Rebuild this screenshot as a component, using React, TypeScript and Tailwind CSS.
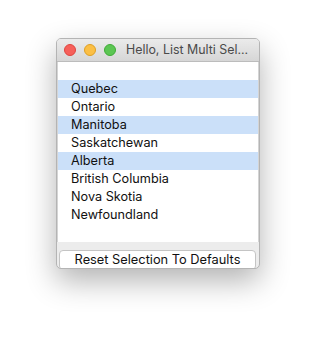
import React from "react";

const provinces = [
  { name: "Quebec", selected: true },
  { name: "Ontario", selected: false },
  { name: "Manitoba", selected: true },
  { name: "Saskatchewan", selected: false },
  { name: "Alberta", selected: true },
  { name: "British Columbia", selected: false },
  { name: "Nova Skotia", selected: false },
  { name: "Newfoundland", selected: false },
];

const font = { fontFamily: "Inter, 'Liberation Sans', sans-serif" };

export default function App() {
  return (
    <div className="w-[316px] h-[342px] bg-white pt-[38px] pl-[56px]" style={font}>
      <div className="w-[204px] h-[231px] flex flex-col rounded-[5px] border border-[#b4b4b4] bg-[#ececec] overflow-hidden shadow-[0_12px_30px_rgba(0,0,0,0.3)]">
        {/* title bar */}
        <div className="h-[23px] shrink-0 flex items-center bg-gradient-to-b from-[#ebebeb] to-[#d6d6d6] border-b border-[#bcbcbc]">
          <div className="flex items-center gap-[8px] pl-[7px]">
            <span className="w-[12px] h-[12px] rounded-full bg-[#f6605a] border border-[#e0443e]" />
            <span className="w-[12px] h-[12px] rounded-full bg-[#fbbf45] border border-[#dfa023]" />
            <span className="w-[12px] h-[12px] rounded-full bg-[#5cc653] border border-[#3fac37]" />
          </div>
          <span className="ml-[10px] text-[12.4px] text-[#4a4a4a] whitespace-nowrap">
            Hello, List Multi Sel...
          </span>
        </div>

        {/* list */}
        <div className="h-[180px] shrink-0 bg-white border-l border-[#d4d4d4] border-r pt-[18px]">
          {provinces.map((p) => (
            <div
              key={p.name}
              className={`h-[18px] flex items-center pl-[13px] text-[12.7px] text-[#111] ${
                p.selected ? "bg-[#cbe0f9]" : ""
              }`}
            >
              {p.name}
            </div>
          ))}
        </div>

        {/* bottom bar */}
        <div className="flex-1 pt-[4px] pl-[2px] pr-[3px]">
          <button className="w-full h-[20px] rounded-[4px] bg-white border border-[#c4c4c4] text-[12.8px] text-[#111] leading-none shadow-[0_1px_0_rgba(0,0,0,0.05)]">
            Reset Selection To Defaults
          </button>
        </div>
      </div>
    </div>
  );
}
